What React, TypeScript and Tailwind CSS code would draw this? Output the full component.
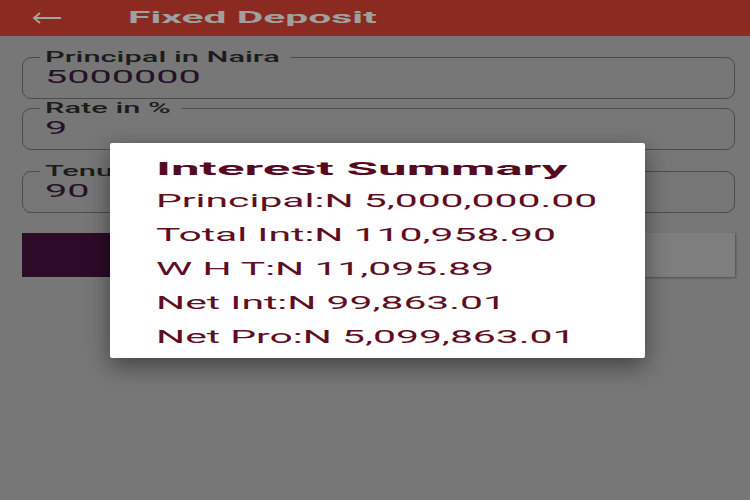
const lines = [
  "Principal:N 5,000,000.00",
  "Total Int:N 110,958.90",
  "W H T:N 11,095.89",
  "Net Int:N 99,863.01",
  "Net Pro:N 5,099,863.01",
];

function Field({ label, value, legendW, className }: { label: string; value: string; legendW: string; className?: string }) {
  return (
    <fieldset className={`border border-[#4c4c4c] rounded-[9px] px-[17px] pb-[10px] ${className ?? ""}`}>
      <legend className={`px-[5px] ${legendW} text-[14px] leading-[16px] font-medium text-[#1c1c1c] whitespace-nowrap`}>
        <span className="inline-block origin-left scale-x-[2.2]">{label}</span>
      </legend>
      <div className="pl-[5px] pt-[1px] text-[18px] leading-[22px] text-[#26102a] whitespace-nowrap">
        <span className="inline-block origin-left scale-x-[2.2]">{value}</span>
      </div>
    </fieldset>
  );
}

export default function App() {
  return (
    <div className="relative w-[750px] h-[500px] overflow-hidden bg-[#777777] font-['Roboto',sans-serif]">
      {/* Toolbar */}
      <header className="h-[36px] bg-[#8b2a20] flex items-center">
        <svg className="ml-[32px]" width="30" height="12" viewBox="0 0 30 12" fill="none" stroke="#a3a3a3" strokeWidth="2">
          <path d="M29 6H2M8 1L2 6l6 5" />
        </svg>
        <h1 className="ml-[66px] text-[17px] font-bold text-[#a0a0a0] whitespace-nowrap">
          <span className="inline-block origin-left scale-x-[2.4]">Fixed Deposit</span>
        </h1>
      </header>

      {/* Form */}
      <main className="pt-[13px] pl-[22px] pr-[15px]">
        <Field label="Principal in Naira" value="5000000" legendW="w-[250px]" />
        <Field label="Rate in %" value="9" legendW="w-[142px]" className="mt-[1px]" />
        <Field label="Tenure" value="90" legendW="w-[130px]" className="mt-[13px]" />
        <div className="mt-[20px] flex gap-[10px]">
          <button className="flex-1 h-[44px] bg-[#2c0a28]" />
          <button className="flex-1 h-[44px] bg-[#7e7e7e] shadow-[1px_1px_2px_rgba(0,0,0,0.35)]" />
        </div>
      </main>

      {/* Dialog */}
      <div className="absolute inset-0 flex items-center justify-center pl-[5px]">
        <div className="w-[535px] h-[215px] bg-white rounded-[2px] shadow-[0_8px_24px_rgba(0,0,0,0.45)] pl-[46px] pt-[10px] text-[#5e0d22] whitespace-nowrap">
          <h2 className="text-[19px] leading-[31px] font-bold text-[#560a1f]">
            <span className="inline-block origin-left scale-x-[2.69]">Interest Summary</span>
          </h2>
          {lines.map((l) => (
            <p key={l} className="text-[19px] leading-[34px]">
              <span className="inline-block origin-left scale-x-[2.15]">{l}</span>
            </p>
          ))}
        </div>
      </div>
    </div>
  );
}
